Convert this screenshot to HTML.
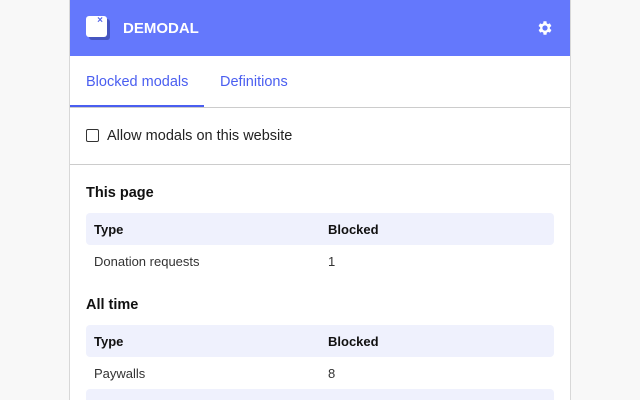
<!DOCTYPE html>
<html><head><style>
*{box-sizing:border-box;margin:0;padding:0}
html,body{width:640px;height:400px;overflow:hidden}
body{background:#f8f8f8;font-family:"Liberation Sans",Arial,sans-serif;position:relative}
.panel{position:absolute;left:69px;top:0;width:502px;height:400px;background:#fff;border-left:1px solid #d8d8d8;border-right:1px solid #d8d8d8;overflow:hidden}
.hdr{position:absolute;left:0;top:0;width:500px;height:56px;background:#6478fc}
.logo{position:absolute;left:16px;top:16px;width:21px;height:21px;background:#fff;border-radius:3px;box-shadow:3px 3px 0 #4555c0}
.logo span{position:absolute;right:4px;top:-1px;color:#5566e8;font-size:10px;font-weight:bold}
.title{position:absolute;left:53px;top:20px;color:#fff;font-weight:bold;font-size:15px}
.gear{position:absolute;left:466px;top:19px}
.tabs{position:absolute;top:56px;left:0;width:500px;height:52px;border-bottom:1px solid #ccc}
.tab{position:absolute;top:18px;color:#4a5ef0;font-size:14.5px}
.ul{position:absolute;left:0;top:49px;width:134px;height:2px;background:#4a5ef0}
.cb{position:absolute;top:108px;left:0;width:500px;height:57px;border-bottom:1px solid #ccc}
.box{position:absolute;left:16px;top:21px;width:13px;height:13px;border:1.5px solid #333;border-radius:2px}
.cbl{position:absolute;left:37px;top:20px;font-size:14.5px;color:#222}
h3{position:absolute;left:16px;font-size:14.5px;color:#111}
.th{position:absolute;left:16px;width:468px;height:32px;background:#eff1fd;border-radius:4px;font-weight:bold;font-size:13px;color:#111}
.th span,.tr span{position:absolute;top:9px}
.tr{position:absolute;left:16px;width:468px;height:32px;font-size:13px;color:#333}
</style></head><body>
<div class="panel">
 <div class="hdr">
  <div class="logo"><span>×</span></div>
  <div class="title">DEMODAL</div>
  <svg class="gear" width="18" height="18" viewBox="0 0 24 24"><path fill="#fff" d="M19.4 13a7.5 7.5 0 0 0 0-2l2.1-1.6-2-3.5-2.5 1a7 7 0 0 0-1.7-1L15 3h-4l-.4 2.9a7 7 0 0 0-1.7 1l-2.5-1-2 3.5L6.6 11a7.5 7.5 0 0 0 0 2l-2.1 1.6 2 3.5 2.5-1a7 7 0 0 0 1.7 1L11 21h4l.4-2.9a7 7 0 0 0 1.7-1l2.5 1 2-3.5zM13 15.5a3.5 3.5 0 1 1 0-7 3.5 3.5 0 0 1 0 7z" transform="translate(-1 0)"/></svg>
 </div>
 <div class="tabs">
  <div class="tab" style="left:16px">Blocked modals</div>
  <div class="tab" style="left:150px">Definitions</div>
  <div class="ul"></div>
 </div>
 <div class="cb"><div class="box"></div><div class="cbl">Allow modals on this website</div></div>
 <h3 style="top:185px">This page</h3>
 <div class="th" style="top:213px"><span style="left:8px">Type</span><span style="left:242px">Blocked</span></div>
 <div class="tr" style="top:245px"><span style="left:8px">Donation requests</span><span style="left:242px">1</span></div>
 <h3 style="top:297px">All time</h3>
 <div class="th" style="top:325px"><span style="left:8px">Type</span><span style="left:242px">Blocked</span></div>
 <div class="tr" style="top:357px"><span style="left:8px">Paywalls</span><span style="left:242px">8</span></div>
 <div class="th" style="top:389px;height:11px;border-radius:4px 4px 0 0"></div>
</div>
</body></html>
